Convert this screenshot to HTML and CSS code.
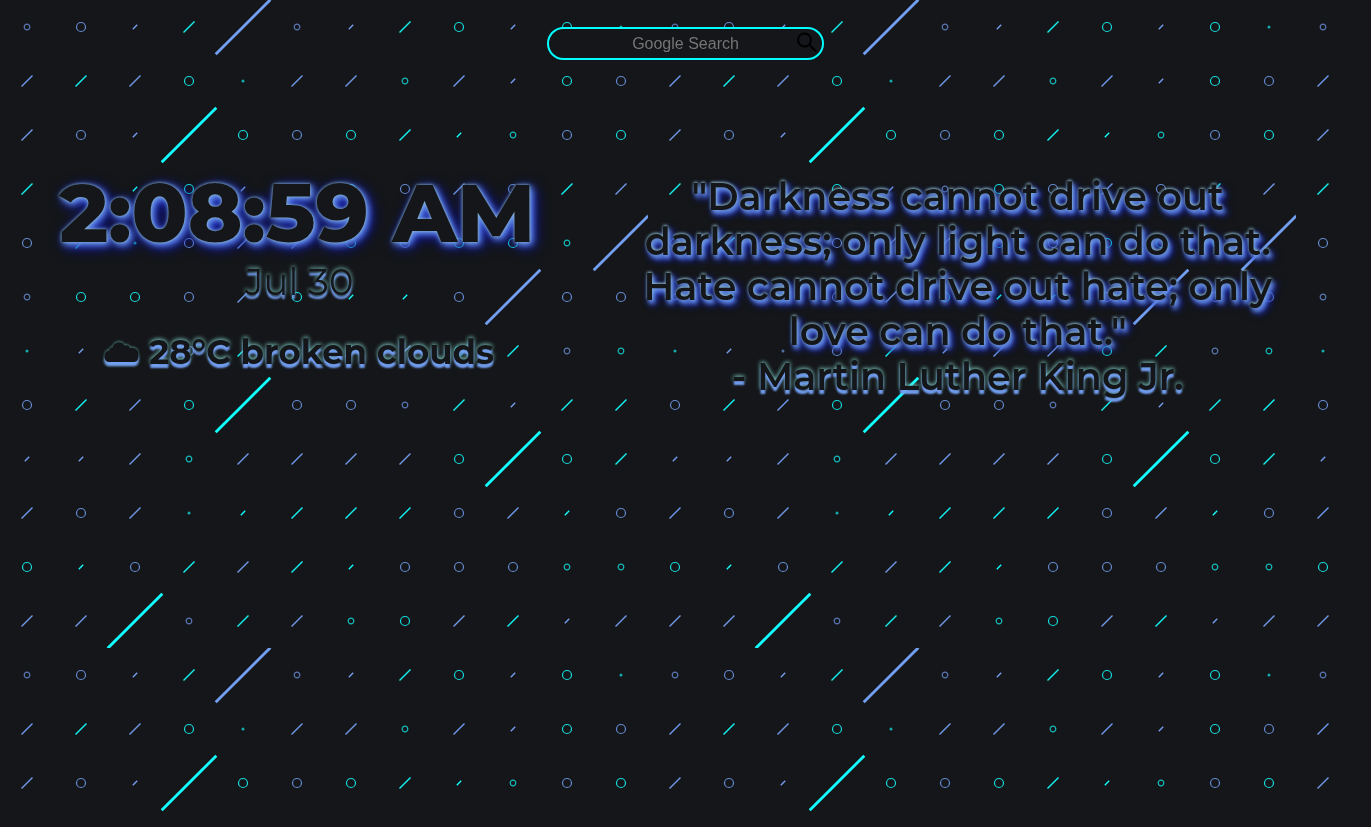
FILE: index.html
```html
<!DOCTYPE html>
<html lang="en">
<head>
<meta charset="utf-8">
<title>New Tab</title>
<link rel="stylesheet" href="styles.css">
</head>
<body>
<svg class="backdrop" aria-hidden="true">
  <defs>
    <g id="line"><path d="M-5.500 5.500L5.500-5.500" stroke-width="1.400" opacity=".95"/></g>
    <g id="dash"><path d="M-2.200 2.200L2.200-2.200" stroke-width="1.400"/></g>
    <g id="ring"><circle r="4.500" stroke-width="1.200" opacity=".85"/></g>
    <g id="bead"><circle r="2.800" stroke-width="1.200" opacity=".7"/></g>
    <g id="dot"><circle r=".8" stroke-width="1.400" opacity=".65"/></g>
    <g id="streak"><path d="M-27.300 27.300L27.300-27.300" stroke-width="2.800"/></g>
    <pattern id="tile" width="648" height="648" patternUnits="userSpaceOnUse"></pattern>
  </defs>
  <rect width="100%" height="100%" fill="url(#tile)"/>
</svg>
<form class="search" role="search">
  <input class="search-box" type="text" aria-label="Google Search" placeholder="Google Search">
  <button class="search-button" type="submit" aria-label="Search">
    <svg viewBox="0 0 20 20" width="20" height="20"><circle cx="7.5" cy="8" r="6.5"/><path d="M12 12.500l7.500 7.500"/></svg>
  </button>
</form>
<main class="board">
  <section class="now">
    <h1 class="clock">2:08:59 AM</h1>
    <p class="date">Jul 30</p>
    <p class="weather">
      <svg class="cloud" viewBox="0 0 35 20" width="35" height="20" aria-hidden="true"><path d="M5 19C-1 19-1 8 5 7.500C6 5 7 4.500 8.500 4.500C10-2 19-2.500 20.500 2.500C24 1.500 25.500 3 26 5C31 4 34.500 7 34.500 11.500C34.500 16 33.500 19 30 19Z"/></svg>
      <span>28°C broken clouds</span>
    </p>
  </section>
  <blockquote class="quote">
    <p class="quote-text">"Darkness cannot drive out<br>darkness; only light can do that.<br>Hate cannot drive out hate; only<br>love can do that."</p>
    <footer class="author">- Martin Luther King Jr.</footer>
  </blockquote>
</main>
<script src="pattern.js"></script>
</body>
</html>
```
FILE: styles.css
```css
* { box-sizing: border-box; }
body {
  margin: 0;
  min-height: 100vh;
  background: #141619;
  color: #141619;
  font-family: Montserrat, Inter, sans-serif;
}
.backdrop {
  position: fixed;
  inset: 0;
  z-index: -1;
  width: 100%;
  height: 100%;
}
.blue { fill: none; stroke: #739ff2; }
.cyan { fill: none; stroke: #1ff; }
.search {
  position: relative;
  width: 277px;
  margin: 0 auto;
  padding-top: 27px;
}
.search-box {
  display: block;
  width: 100%;
  height: 33px;
  padding: 0 32px;
  border: 2px solid #0ff;
  border-radius: 17px;
  outline: 0;
  background: #141619;
  color: #739ff2;
  font: 16px "Liberation Sans", Arial, sans-serif;
  text-align: center;
}
.search-box::placeholder { color: #757575; }
.search-button {
  position: absolute;
  right: 7px;
  bottom: 8px;
  padding: 0;
  border: 0;
  background: none;
  line-height: 0;
}
.search-button svg { fill: none; stroke: #000; stroke-width: 2; }
.board {
  display: grid;
  grid-template-columns: 9fr 11fr;
  padding: 104px 50px 0 0;
  text-align: center;
}
.clock {
  margin: 0;
  font-size: 82px;
  font-weight: 800;
  line-height: 98px;
  white-space: nowrap;
  text-shadow: 0 0 3px #8fbcc0, 2px 2px 6px #6f9cf0, 3px 3px 10px #3f60e0, 4px 4px 16px #0000a8;
}
.date, .weather, .author {
  text-shadow: 0 4px 2px #739ff2, 0 -1px 4px #80d0c8;
}
.date {
  margin: 0;
  padding-left: 4px;
  font-size: 37px;
  line-height: 40px;
}
.weather {
  display: flex;
  justify-content: center;
  align-items: center;
  gap: 10px;
  margin: 28px 0 0;
  padding-left: 4px;
  font-size: 34px;
  font-weight: 700;
  line-height: 45px;
}
.cloud {
  overflow: visible;
  fill: #141619;
  filter: drop-shadow(0 4px 1px #739ff2) drop-shadow(0 -1px 1px #4a807c);
}
.quote {
  margin: 0;
  padding-top: 10px;
  font-size: 38px;
  font-weight: 600;
  line-height: 45px;
  white-space: nowrap;
}
.quote-text {
  margin: 0;
  text-shadow: 0 -1px 3px #8fbcc0, 2px 3px 4px #6f9cf0, 3px 4px 6px #3f60e0, 4px 4px 10px #0000a8;
}
```
FILE: pattern.js
```js
// One letter per 54px cell: upper case is blue, lower case is cyan.
const rows = [
  'QOSlXQSloSod', 'LlLodLLqLSoO', 'LOSxoOolsqOo', 'l.soSQoOLOlL',
  'OldOLLoOooqX', 'QooOLossOXOO', 'dSDOlSLLolQq', 'OlLoxOOQlSll',
  'SSLqLLLLoxol', 'LOLdslllOLsO', 'osOlLlsOOOqq', 'LLxQlLqoLlSL'
];
const shapes = { l: 'line', s: 'dash', o: 'ring', q: 'bead', d: 'dot', x: 'streak' };
const tile = document.getElementById('tile');
rows.forEach((row, r) => [...row].forEach((key, c) => {
  const name = shapes[key.toLowerCase()];
  if (!name) return;
  const use = document.createElementNS('http://www.w3.org/2000/svg', 'use');
  use.setAttribute('href', '#' + name);
  use.setAttribute('x', c * 54 + 27);
  use.setAttribute('y', r * 54 + 27);
  use.setAttribute('class', key === key.toLowerCase() ? 'cyan' : 'blue');
  tile.append(use);
}));
```
